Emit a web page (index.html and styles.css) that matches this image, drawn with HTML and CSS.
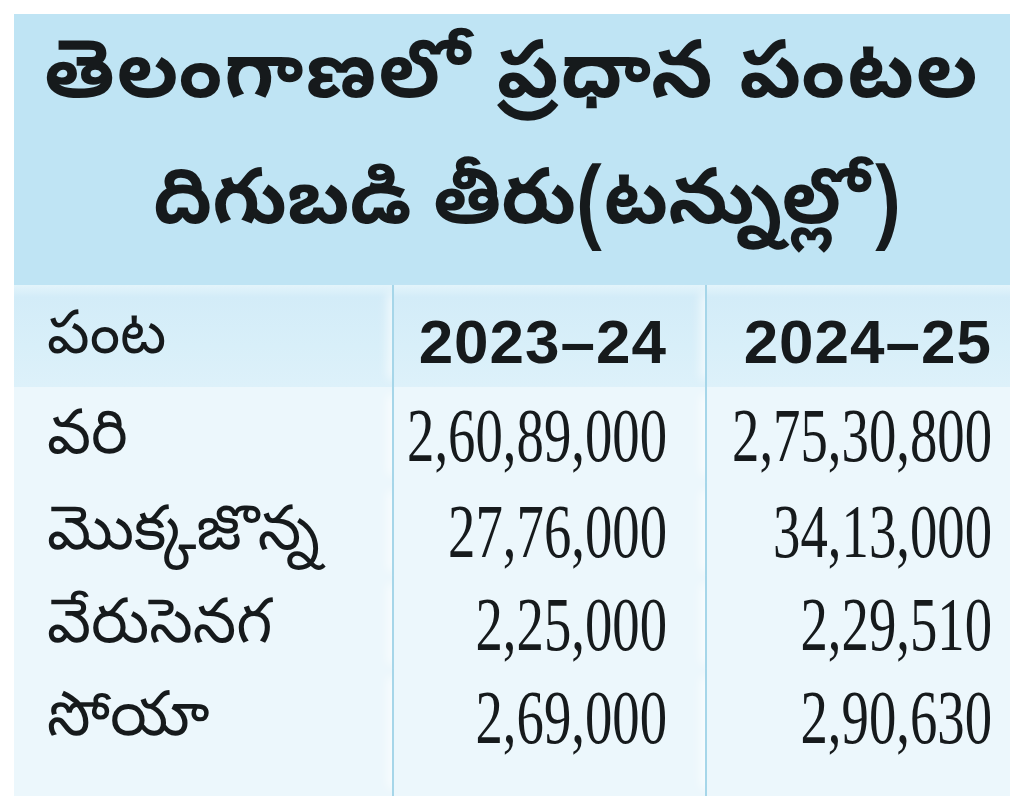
FILE: index.html
```html
<!DOCTYPE html>
<html lang="te">
<head>
<meta charset="utf-8">
<title>తెలంగాణలో ప్రధాన పంటల దిగుబడి తీరు</title>
<link rel="stylesheet" href="styles.css">
</head>
<body>
<div class="panel">
  <div class="title">
    <div class="title-line first">తెలంగాణలో ప్రధాన పంటల</div>
    <div class="title-line second">దిగుబడి తీరు(టన్నుల్లో)</div>
  </div>
  <div class="table">
    <div class="row head">
      <div class="cell crop">పంట</div>
      <div class="cell year">2023–24</div>
      <div class="cell year">2024–25</div>
    </div>
    <div class="body">
      <div class="row">
        <div class="cell crop">వరి</div>
        <div class="cell num"><span>2,60,89,000</span></div>
        <div class="cell num"><span>2,75,30,800</span></div>
      </div>
      <div class="row">
        <div class="cell crop">మొక్కజొన్న</div>
        <div class="cell num"><span>27,76,000</span></div>
        <div class="cell num"><span>34,13,000</span></div>
      </div>
      <div class="row">
        <div class="cell crop">వేరుసెనగ</div>
        <div class="cell num"><span>2,25,000</span></div>
        <div class="cell num"><span>2,29,510</span></div>
      </div>
      <div class="row">
        <div class="cell crop">సోయా</div>
        <div class="cell num"><span>2,69,000</span></div>
        <div class="cell num"><span>2,90,630</span></div>
      </div>
    </div>
  </div>
</div>
</body>
</html>
```
FILE: styles.css
```css
html, body {
  margin: 0;
  padding: 0;
  background: #ffffff;
}
body {
  width: 1024px;
  height: 806px;
  padding: 14px 14px 10px 14px;
  box-sizing: border-box;
  font-family: "Noto Sans Telugu", "Noto Serif Telugu", "Lohit Telugu", "Noto Sans", sans-serif;
  color: #161a1c;
}
.panel {
  height: 782px;
  display: flex;
  flex-direction: column;
  background: #ecf7fc;
}
.title {
  height: 274px;
  box-sizing: border-box;
  background: #bfe4f4;
  display: flex;
  flex-direction: column;
  align-items: center;
  justify-content: center;
  padding-bottom: 10px;
}
.title-line {
  font-size: 80px;
  font-weight: 700;
  line-height: 126px;
  white-space: nowrap;
}
.title-line.first {
  letter-spacing: 2px;
}
.title-line.second {
  font-size: 77px;
  padding-left: 30px;
}
.table {
  flex: 1;
  display: flex;
  flex-direction: column;
}
.row {
  display: grid;
  grid-template-columns: 378px 313px 1fr;
}
.head {
  height: 102px;
  background: linear-gradient(#e3f4fb, #d3ecf8 12%, #d8eff9 60%, #ddf1fa);
}
.head .cell {
  padding-top: 10px;
}
.body {
  flex: 1;
  display: flex;
  flex-direction: column;
}
.body .row {
  height: 93px;
}
.body .row:first-child {
  height: 96px;
}
.body .row:last-child {
  flex: 1;
  height: auto;
}
.body .row:last-child .cell {
  padding-bottom: 31px;
}
.cell {
  display: flex;
  align-items: center;
  white-space: nowrap;
  box-sizing: border-box;
}
.cell + .cell {
  border-left: 2px solid #a6d6e9;
  box-shadow: -12px 0 10px -8px rgba(255,255,255,0.7);
  justify-content: flex-end;
}
.row > .cell:nth-child(2) {
  padding-right: 38px;
}
.row > .cell:nth-child(3) {
  padding-right: 18px;
}
.crop {
  padding-left: 33px;
  font-size: 62px;
}
.body .crop {
  padding-top: 12px;
}
.head .crop {
  font-size: 60px;
}
.year {
  font-family: "Liberation Sans", Arial, sans-serif;
  font-weight: 700;
  font-size: 62px;
  letter-spacing: 1px;
}
.num span {
  display: inline-block;
  margin-left: -110px;
  font-family: "Liberation Serif", "Times New Roman", serif;
  font-size: 76px;
  transform: scaleX(0.72);
  transform-origin: right center;
}
```
